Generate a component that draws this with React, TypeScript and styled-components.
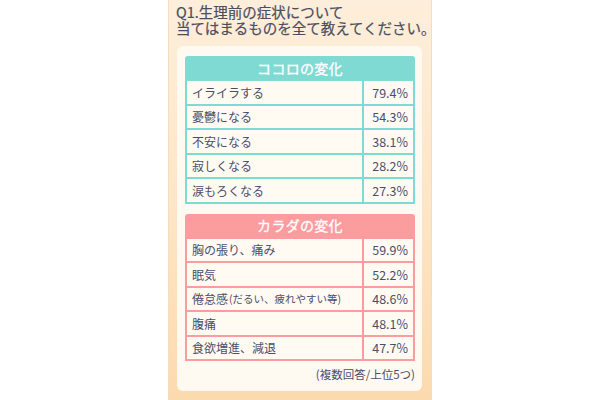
import React from 'react';
import styled, { createGlobalStyle } from 'styled-components';

const GlobalStyle = createGlobalStyle`
  html, body {
    margin: 0;
    padding: 0;
    background: #ffffff;
  }
  body {
    font-family: "Noto Sans CJK JP", "Noto Sans", sans-serif;
  }
`;

const Page = styled.div`
  width: 600px;
  height: 400px;
  display: flex;
  justify-content: center;
  overflow: hidden;
`;

const Panel = styled.div`
  width: 264px;
  height: 400px;
  box-sizing: border-box;
  padding: 4px 6px 0 7px;
  background: linear-gradient(180deg, #fdeedb 0%, #fde6c6 50%, #fcdaae 100%);
  border-left: 1px solid #f3dcc0;
  border-right: 1px solid #f3dcc0;
`;

const Title = styled.h1`
  margin: 0 0 10px 0;
  font-size: 14.5px;
  line-height: 16px;
  font-weight: 400;
  color: #4b4d5e;
  letter-spacing: 0;
  white-space: nowrap;
  -webkit-text-stroke: 0.2px #4b4d5e;
`;

const TitleLine = styled.span`
  display: block;
`;

const Card = styled.div`
  margin: 0 3px 0 1px;
  background: #fefaf1;
  border-radius: 6px;
  padding: 10px 7px 9px 8px;
  display: flex;
  flex-direction: column;
  gap: 10px;
`;

const Table = styled.div<{ $color: string }>`
  display: grid;
  grid-template-columns: 1fr 49px;
  gap: 2px;
  padding: 0 2px 2px;
  background: ${p => p.$color};
  border-radius: 3px 3px 0 0;
`;

const TableHead = styled.div`
  grid-column: 1 / -1;
  height: 23px;
  display: flex;
  align-items: center;
  justify-content: center;
  color: #ffffff;
  font-size: 14px;
  font-weight: 400;
  letter-spacing: 0.3px;
  -webkit-text-stroke: 0.3px #ffffff;
`;

const Cell = styled.div`
  height: 22.5px;
  background: #fffbf3;
  display: flex;
  align-items: center;
  color: #4a4e6b;
  font-size: 12px;
  white-space: nowrap;
`;

const LabelCell = styled(Cell)`
  padding-left: 5px;
`;

const ValueCell = styled(Cell)`
  justify-content: flex-end;
  padding-right: 5px;
  font-size: 12.5px;
`;

const Small = styled.span`
  font-size: 10.5px;
  margin-left: 1px;
`;

const Note = styled.div`
  margin-top: -5px;
  text-align: right;
  font-size: 11.5px;
  color: #4a4e6b;
`;

type Row = { label: React.ReactNode; value: string };

const kokoro: Row[] = [
  { label: 'イライラする', value: '79.4%' },
  { label: '憂鬱になる', value: '54.3%' },
  { label: '不安になる', value: '38.1%' },
  { label: '寂しくなる', value: '28.2%' },
  { label: '涙もろくなる', value: '27.3%' },
];

const karada: Row[] = [
  { label: '胸の張り、痛み', value: '59.9%' },
  { label: '眠気', value: '52.2%' },
  {
    label: (
      <>
        倦怠感 <Small>(だるい、疲れやすい等)</Small>
      </>
    ),
    value: '48.6%',
  },
  { label: '腹痛', value: '48.1%' },
  { label: '食欲増進、減退', value: '47.7%' },
];

const ResultTable = ({ title, rows, color }: { title: string; rows: Row[]; color: string }) => (
  <Table $color={color}>
    <TableHead>{title}</TableHead>
    {rows.map((r, i) => (
      <React.Fragment key={i}>
        <LabelCell>{r.label}</LabelCell>
        <ValueCell>{r.value}</ValueCell>
      </React.Fragment>
    ))}
  </Table>
);

const App = () => {
  return (
    <>
      <GlobalStyle />
      <Page>
        <Panel>
          <Title>
            <TitleLine>Q1.生理前の症状について</TitleLine>
            <TitleLine>当てはまるものを全て教えてください。</TitleLine>
          </Title>
          <Card>
            <ResultTable title="ココロの変化" rows={kokoro} color="#80dad4" />
            <ResultTable title="カラダの変化" rows={karada} color="#fb9c9e" />
            <Note>(複数回答/上位5つ)</Note>
          </Card>
        </Panel>
      </Page>
    </>
  );
};

export default App;
